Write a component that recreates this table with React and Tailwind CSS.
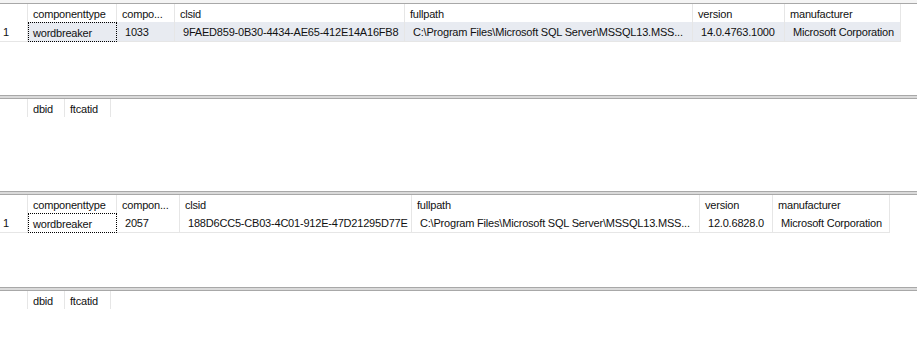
import React from 'react';

const grid1 = {
    cols: [
        { name: 'componenttype', w: 89 },
        { name: 'compo...', w: 58 },
        { name: 'clsid', w: 230 },
        { name: 'fullpath', w: 288 },
        { name: 'version', w: 92 },
        { name: 'manufacturer', w: 116 },
    ],
    row: ['wordbreaker', '1033', '9FAED859-0B30-4434-AE65-412E14A16FB8', 'C:\\Program Files\\Microsoft SQL Server\\MSSQL13.MSS...', '14.0.4763.1000', 'Microsoft Corporation'],
    selected: true,
};

const grid2 = {
    cols: [
        { name: 'componenttype', w: 89 },
        { name: 'compon...', w: 63 },
        { name: 'clsid', w: 232 },
        { name: 'fullpath', w: 288 },
        { name: 'version', w: 73 },
        { name: 'manufacturer', w: 117 },
    ],
    row: ['wordbreaker', '2057', '188D6CC5-CB03-4C01-912E-47D21295D77E', 'C:\\Program Files\\Microsoft SQL Server\\MSSQL13.MSS...', '12.0.6828.0', 'Microsoft Corporation'],
    selected: false,
};

const emptyCols = [
    { name: 'dbid', w: 37 },
    { name: 'ftcatid', w: 46 },
];

const Splitter = () => (
    <div className="h-[4px] bg-[#dadada] border-t border-b border-[#a8a8a8] flex-shrink-0"></div>
);

const ResultGrid = ({ cols, row, selected, height }) => (
    <div className={`flex-shrink-0 overflow-hidden bg-white ${height}`}>
        {/* Header */}
        <div className="flex h-[18px] items-center">
            <div className="w-[28px] h-full border-r border-[#e6e6e6]"></div>
            {cols.map((c) => (
                <div key={c.name} className="h-full border-r border-[#e6e6e6] pl-[5px] pt-[2px] flex items-center whitespace-nowrap overflow-hidden" style={{ width: c.w }}>
                    {c.name}
                </div>
            ))}
        </div>
        {row && (
            <div className="flex h-[20px] items-stretch">
                <div className="w-[28px] pl-[3px] pt-[2px] flex items-center border-r border-[#e6e6e6] border-b">1</div>
                {cols.map((c, i) => (
                    <div
                        key={c.name}
                        className={`flex items-center whitespace-nowrap overflow-hidden pt-[2px] ${i === 0 ? 'pl-[4px] border border-dotted border-black' : 'pl-[8px] border-r border-b border-[#e6e6e6]'} ${selected ? 'bg-[#e8ebf1]' : 'bg-white'}`}
                        style={{ width: c.w }}
                    >
                        {row[i]}
                    </div>
                ))}
            </div>
        )}
    </div>
);

export default function App() {
    return (
        <div className="w-[917px] h-[357px] flex flex-col bg-white text-[11px] tracking-[-0.2px] text-[#111] overflow-hidden" style={{ fontFamily: '"Liberation Sans", Arial, sans-serif' }}>
            <div className="h-[4px] bg-[#f4f4f4] border-b border-[#a8a8a8] flex-shrink-0"></div>
            <ResultGrid {...grid1} height="h-[91px]" />
            <Splitter />
            <ResultGrid cols={emptyCols} height="h-[92px]" />
            <Splitter />
            <ResultGrid {...grid2} height="h-[92px]" />
            <Splitter />
            <ResultGrid cols={emptyCols} height="flex-1" />
        </div>
    );
}
